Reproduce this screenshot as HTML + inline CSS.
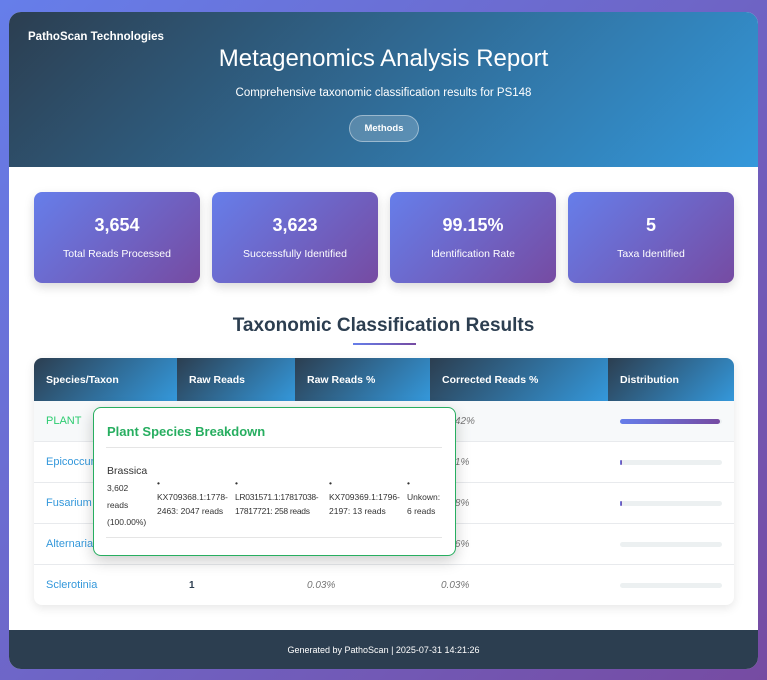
<!DOCTYPE html>
<html><head><meta charset="utf-8"><style>
*{margin:0;padding:0;box-sizing:border-box}
body{width:767px;height:680px;background:linear-gradient(135deg,#667eea,#764ba2);font-family:"Liberation Sans",sans-serif;position:relative;overflow:hidden}
.c{position:absolute;left:9px;top:12px;width:749px;height:657px;background:#fff;border-radius:12px;overflow:hidden}
.h{position:absolute;left:0;top:0;width:749px;height:155px;background:linear-gradient(135deg,#2c3e50,#3498db);color:#fff;text-align:center}
.brand{position:absolute;left:19px;top:19px;font-size:11.5px;font-weight:bold}
.h h1{position:absolute;left:0;right:0;top:33px;font-size:24px;font-weight:300}
.sub{position:absolute;left:0;right:0;top:75px;font-size:11.5px}
.btn{position:absolute;left:340px;top:103px;width:70px;height:27px;border-radius:14px;background:rgba(255,255,255,.2);border:1px solid rgba(255,255,255,.4);font-size:9.5px;font-weight:bold;line-height:25px}
.card{position:absolute;top:180px;width:166px;height:91px;border-radius:8px;background:linear-gradient(135deg,#667eea,#764ba2);color:#fff;text-align:center;box-shadow:0 4px 10px rgba(0,0,0,.15)}
.card b{display:block;margin-top:23px;font-size:18px}
.card span{display:block;margin-top:12px;font-size:10.5px}
.t{position:absolute;left:0;right:0;top:303px;text-align:center;font-size:19px;font-weight:bold;color:#2c3e50}
.ul{position:absolute;left:344px;top:331px;width:63px;height:2px;background:linear-gradient(90deg,#667eea,#764ba2)}
.tb{position:absolute;left:25px;top:346px;width:700px;height:247px;border-radius:8px;overflow:hidden;box-shadow:0 3px 10px rgba(0,0,0,.1)}
.th{position:absolute;top:0;height:43px;background:linear-gradient(135deg,#2c3e50,#3498db);color:#fff;font-size:10.5px;font-weight:bold;line-height:45px;padding-left:12px}
.row{position:absolute;left:0;width:700px;height:41px;border-bottom:1px solid #e8eaed;font-size:11px;line-height:41px}
.row .n{position:absolute;left:12px;color:#3498db}
.row .r{position:absolute;left:155px;color:#2c3e50;font-weight:bold;font-size:10px}
.row .p{position:absolute;left:273px;color:#777;font-style:italic;font-size:10px}
.row .q{position:absolute;left:407px;color:#777;font-style:italic;font-size:10px}
.bar{position:absolute;left:586px;top:18px;width:102px;height:5px;border-radius:3px;background:#ecf0f1}
.bar i{display:block;height:5px;width:2px;border-radius:3px;background:linear-gradient(90deg,#667eea,#764ba2)}
.pop{position:absolute;left:84px;top:395px;width:363px;height:149px;border:1px solid #27ae60;border-radius:8px;background:#fff;box-shadow:0 5px 15px rgba(0,0,0,.2);font-size:8.5px;color:#333}
.pop h3{position:absolute;left:13px;top:16px;font-size:13px;color:#27ae60}
.hr{position:absolute;left:12px;width:336px;height:1px;background:#e5e5e5}
.ft{position:absolute;left:0;top:618px;width:749px;height:39px;background:#2c3e50;color:#fff;font-size:9px;text-align:center;line-height:41px}
</style></head><body>
<div class="c">
<div class="h"><div class="brand">PathoScan Technologies</div><h1>Metagenomics Analysis Report</h1><div class="sub">Comprehensive taxonomic classification results for PS148</div><div class="btn">Methods</div></div>
<div class="card" style="left:25px"><b>3,654</b><span>Total Reads Processed</span></div>
<div class="card" style="left:203px"><b>3,623</b><span>Successfully Identified</span></div>
<div class="card" style="left:381px"><b>99.15%</b><span>Identification Rate</span></div>
<div class="card" style="left:559px"><b>5</b><span>Taxa Identified</span></div>
<div class="t">Taxonomic Classification Results</div><div class="ul"></div>
<div class="tb">
<div class="th" style="left:0;width:143px">Species/Taxon</div>
<div class="th" style="left:143px;width:118px">Raw Reads</div>
<div class="th" style="left:261px;width:135px">Raw Reads %</div>
<div class="th" style="left:396px;width:178px">Corrected Reads %</div>
<div class="th" style="left:574px;width:126px">Distribution</div>
<div class="row" style="top:43px;background:#f7f9fa"><span class="n" style="color:#2ecc71">PLANT</span><span class="q">99.42%</span><div class="bar"><i style="width:100px"></i></div></div>
<div class="row" style="top:84px"><span class="n">Epicoccum</span><span class="q">0.41%</span><div class="bar"><i></i></div></div>
<div class="row" style="top:125px"><span class="n">Fusarium</span><span class="q">0.08%</span><div class="bar"><i></i></div></div>
<div class="row" style="top:166px"><span class="n">Alternaria</span><span class="q">0.06%</span><div class="bar"><i style="width:0"></i></div></div>
<div class="row" style="top:207px;border:0"><span class="n">Sclerotinia</span><span class="r">1</span><span class="p">0.03%</span><span class="q">0.03%</span><div class="bar"><i style="width:0"></i></div></div>
</div>
<div class="pop"><h3>Plant Species Breakdown</h3><div class="hr" style="top:39px"></div>
<div style="position:absolute;left:13px;top:57px;font-size:10.5px">Brassica</div>
<div style="position:absolute;left:13px;top:72px;line-height:17px">3,602<br>reads<br>(100.00%)</div>
<div style="position:absolute;left:63px;top:68px;line-height:14px">•<br>KX709368.1:1778-<br>2463: 2047 reads</div>
<div style="position:absolute;left:141px;top:68px;line-height:14px;letter-spacing:-0.3px">•<br>LR031571.1:17817038-<br>17817721: 258 reads</div>
<div style="position:absolute;left:235px;top:68px;line-height:14px">•<br>KX709369.1:1796-<br>2197: 13 reads</div>
<div style="position:absolute;left:313px;top:68px;line-height:14px">•<br>Unkown:<br>6 reads</div>
<div class="hr" style="top:129px"></div></div>
<div class="ft">Generated by PathoScan | 2025-07-31 14:21:26</div>
</div>
</body></html>
